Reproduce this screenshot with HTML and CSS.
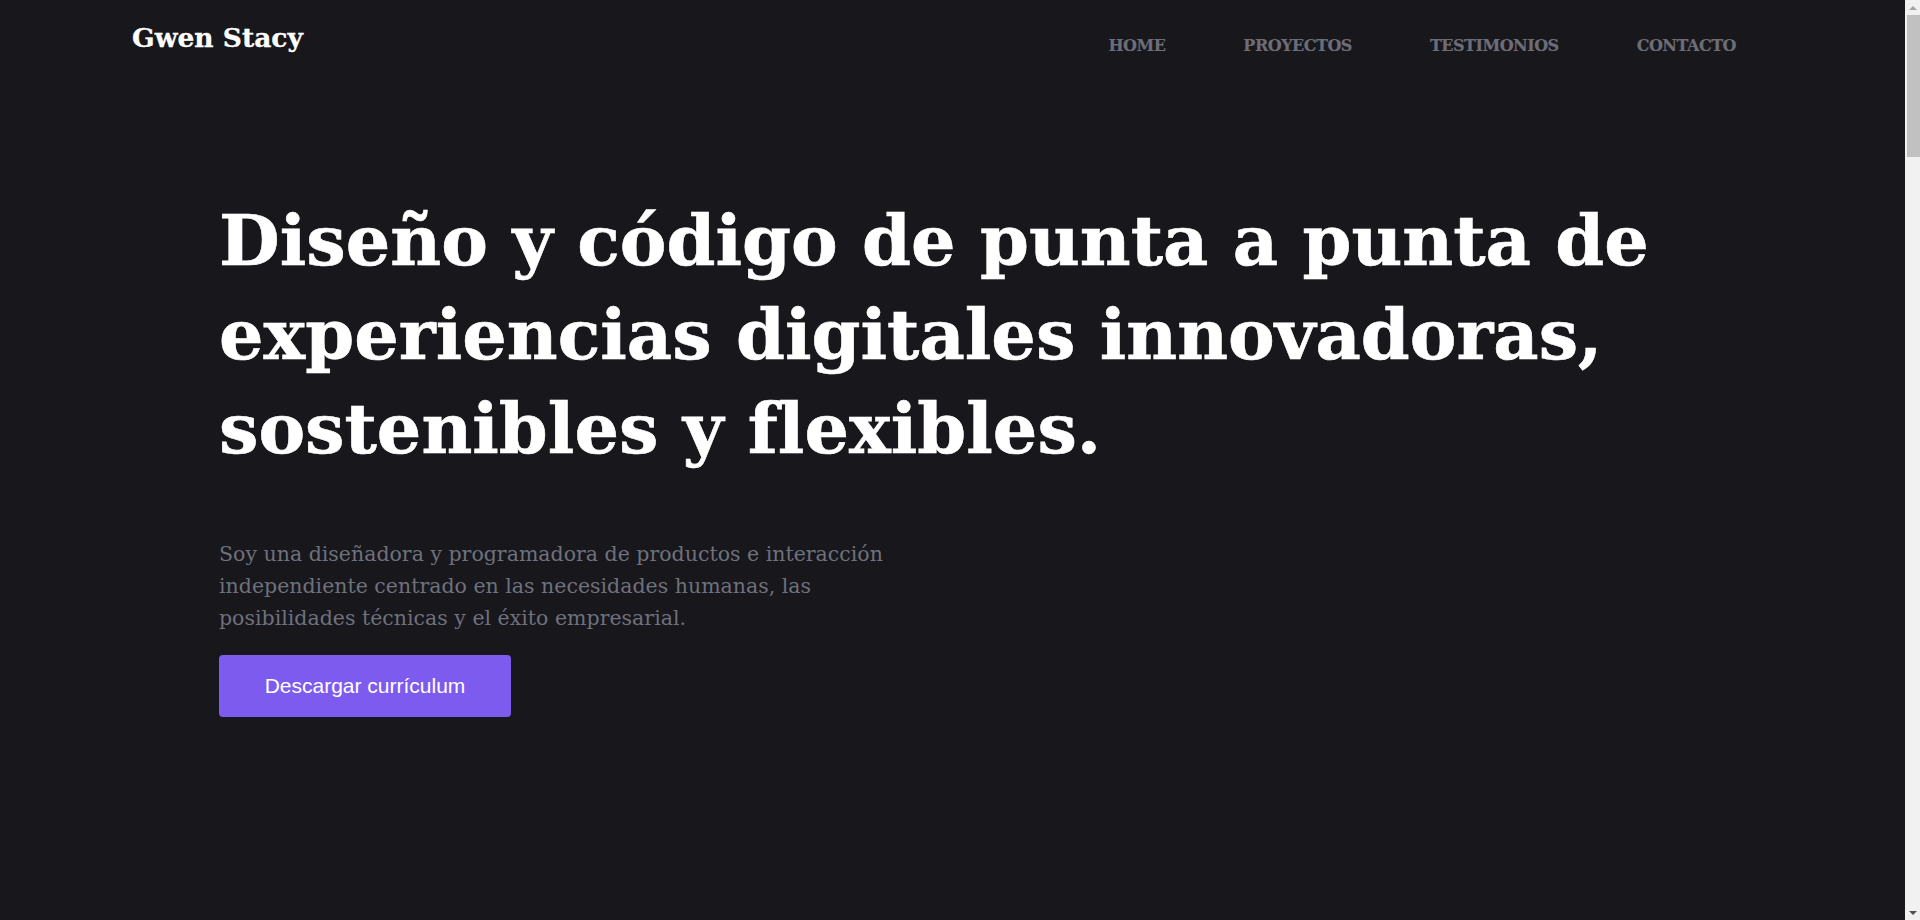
FILE: index.html
```html
<!DOCTYPE html>
<html lang="es">
<head>
<meta charset="utf-8">
<title>Gwen Stacy</title>
<link rel="stylesheet" href="styles.css">
</head>
<body>
<header class="site-header">
  <a class="logo" href="#">Gwen Stacy</a>
  <nav class="main-nav">
    <a class="nav-link" href="#">HOME</a>
    <a class="nav-link" href="#proyectos">PROYECTOS</a>
    <a class="nav-link" href="#testimonios">TESTIMONIOS</a>
    <a class="nav-link" href="#contacto">CONTACTO</a>
  </nav>
</header>
<main>
  <section class="hero">
    <h1 class="hero-title">Diseño y código de punta a punta de<br>experiencias digitales innovadoras,<br>sostenibles y flexibles.</h1>
    <p class="hero-text">Soy una diseñadora y programadora de productos e interacción<br>independiente centrado en las necesidades humanas, las<br>posibilidades técnicas y el éxito empresarial.</p>
    <a class="btn" href="#">Descargar currículum</a>
  </section>
  <section class="section" id="proyectos"></section>
  <section class="section" id="testimonios"></section>
  <section class="section" id="contacto"></section>
</main>
<div class="scrollbar" aria-hidden="true">
  <span class="sb-btn"><span class="sb-arrow sb-up"></span></span>
  <span class="sb-thumb"></span>
  <span class="sb-track"></span>
  <span class="sb-btn"><span class="sb-arrow sb-down"></span></span>
</div>
</body>
</html>
```
FILE: styles.css
```css
html, body {
  margin: 0;
  padding: 0;
  background: #18171c;
}

html {
  scrollbar-width: none;
}

body {
  font-family: "DejaVu Serif", serif;
  color: #ffffff;
  padding-right: 15px;
}

a {
  text-decoration: none;
}

.site-header {
  display: flex;
  justify-content: space-between;
  align-items: flex-start;
  padding: 22px 130px 0 132px;
  height: 72px;
  box-sizing: border-box;
}

.logo {
  font-size: 26.5px;
  line-height: 32px;
  font-weight: bold;
  color: #ffffff;
  -webkit-text-stroke: 0.3px #ffffff;
}

.main-nav {
  display: flex;
  margin-top: 14px;
}

.nav-link {
  font-size: 16px;
  line-height: 20px;
  font-weight: bold;
  color: #6d6d77;
  padding: 0 39px;
  letter-spacing: -0.5px;
  -webkit-text-stroke: 0.2px #6d6d77;
}

.hero {
  padding: 122px 0 0 219px;
  min-height: 848px;
  box-sizing: border-box;
}

.hero-title {
  margin: 0;
  font-size: 70px;
  line-height: 94px;
  font-weight: bold;
  color: #ffffff;
  -webkit-text-stroke: 0.6px #ffffff;
}

.hero-text {
  margin: 62px 0 0 0;
  font-size: 20.5px;
  line-height: 32px;
  color: #6e717c;
}

.btn {
  display: flex;
  align-items: center;
  justify-content: center;
  width: 292px;
  height: 62px;
  margin-top: 21px;
  background: #7e5bef;
  border-radius: 4px;
  font-family: "Liberation Sans", Arial, sans-serif;
  font-size: 21px;
  color: #ffffff;
}

.section {
  height: 1615px;
}

/* classic window scrollbar shown in the reference */
.scrollbar {
  position: fixed;
  top: 0;
  right: 0;
  width: 15px;
  height: 100vh;
  display: flex;
  flex-direction: column;
  background: #f1f1f1;
}

.sb-btn {
  height: 15px;
  flex: none;
  display: flex;
  align-items: center;
  justify-content: center;
}

.sb-arrow {
  width: 0;
  height: 0;
  border-left: 4px solid transparent;
  border-right: 4px solid transparent;
}

.sb-up {
  border-bottom: 4px solid #a3a3a3;
}

.sb-down {
  border-top: 4px solid #505050;
}

.sb-thumb {
  height: 142px;
  flex: none;
  margin-left: 2px;
  background: #c1c1c1;
}

.sb-track {
  flex: 1;
}
```
